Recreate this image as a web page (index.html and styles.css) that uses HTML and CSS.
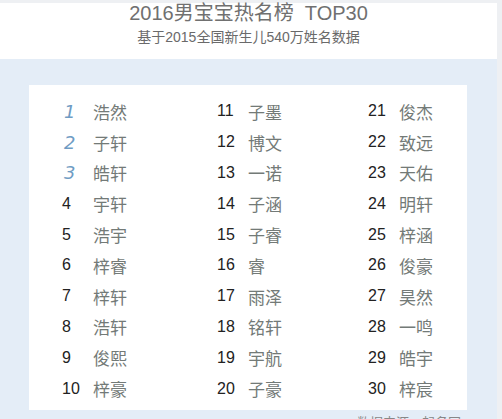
FILE: index.html
```html
<!DOCTYPE html>
<html lang="zh-CN">
<head>
  <meta charset="UTF-8" />
  <meta name="viewport" content="width=device-width, initial-scale=1.0" />
  <title>2016男宝宝热名榜 TOP30</title>
  <link rel="stylesheet" href="styles.css">
</head>
<body>
  <div class="page">
    <div class="head">
      <h1 class="title">2016男宝宝热名榜&nbsp; TOP30</h1>
      <p class="sub">基于2015全国新生儿540万姓名数据</p>
    </div>

    <div class="main">
      <div class="card">
        <div class="col">
          <div class="row"><span class="num top">1</span><span class="name">浩然</span></div>
          <div class="row"><span class="num top">2</span><span class="name">子轩</span></div>
          <div class="row"><span class="num top">3</span><span class="name">皓轩</span></div>
          <div class="row"><span class="num">4</span><span class="name">宇轩</span></div>
          <div class="row"><span class="num">5</span><span class="name">浩宇</span></div>
          <div class="row"><span class="num">6</span><span class="name">梓睿</span></div>
          <div class="row"><span class="num">7</span><span class="name">梓轩</span></div>
          <div class="row"><span class="num">8</span><span class="name">浩轩</span></div>
          <div class="row"><span class="num">9</span><span class="name">俊熙</span></div>
          <div class="row"><span class="num">10</span><span class="name">梓豪</span></div>
        </div>
        <div class="col">
          <div class="row"><span class="num">11</span><span class="name">子墨</span></div>
          <div class="row"><span class="num">12</span><span class="name">博文</span></div>
          <div class="row"><span class="num">13</span><span class="name">一诺</span></div>
          <div class="row"><span class="num">14</span><span class="name">子涵</span></div>
          <div class="row"><span class="num">15</span><span class="name">子睿</span></div>
          <div class="row"><span class="num">16</span><span class="name">睿</span></div>
          <div class="row"><span class="num">17</span><span class="name">雨泽</span></div>
          <div class="row"><span class="num">18</span><span class="name">铭轩</span></div>
          <div class="row"><span class="num">19</span><span class="name">宇航</span></div>
          <div class="row"><span class="num">20</span><span class="name">子豪</span></div>
        </div>
        <div class="col">
          <div class="row"><span class="num">21</span><span class="name">俊杰</span></div>
          <div class="row"><span class="num">22</span><span class="name">致远</span></div>
          <div class="row"><span class="num">23</span><span class="name">天佑</span></div>
          <div class="row"><span class="num">24</span><span class="name">明轩</span></div>
          <div class="row"><span class="num">25</span><span class="name">梓涵</span></div>
          <div class="row"><span class="num">26</span><span class="name">俊豪</span></div>
          <div class="row"><span class="num">27</span><span class="name">昊然</span></div>
          <div class="row"><span class="num">28</span><span class="name">一鸣</span></div>
          <div class="row"><span class="num">29</span><span class="name">皓宇</span></div>
          <div class="row"><span class="num">30</span><span class="name">梓宸</span></div>
        </div>
      </div>
      <p class="source">数据来源：起名网</p>
    </div>
  </div>
</body>
</html>
```

FILE: styles.css
```css
* {
  box-sizing: border-box;
}
body {
  margin: 0;
  font-family: "Liberation Sans", "Noto Sans CJK SC", sans-serif;
  background: #eef0f3;
  overflow: hidden;
}

.page {
  width: 502px;
  height: 419px;
  padding-top: 3px;
  padding-right: 5px;
  overflow: hidden;
}

.head {
  background: #fff;
  height: 56px;
  text-align: center;
  color: #6a6a6a;
}
.title {
  margin: 0;
  font-size: 20px;
  font-weight: normal;
  line-height: 20px;
  color: #707070;
}
.sub {
  margin: 4px 0 0;
  font-size: 14px;
  line-height: 20px;
}

.main {
  background: #e4edf7;
  height: 360px;
  padding: 26px 30px 0 29px;
}

.card {
  background: #fff;
  width: 438px;
  height: 325px;
  padding: 11px 0 0 33px;
  display: grid;
  grid-template-columns: 155px 151px 1fr;
}

.row {
  display: flex;
  align-items: center;
  height: 30.8px;
}
.num {
  width: 31px;
  font-size: 16px;
  color: #222;
}
.num.top {
  font-family: "DejaVu Sans", sans-serif;
  font-style: italic;
  font-size: 18px;
  color: #6f9cc4;
  padding-left: 2px;
}
.name {
  font-size: 17px;
  color: #737a77;
}

.source {
  margin: 2px 0 0;
  text-align: right;
  padding-right: 6px;
  font-size: 13px;
  color: #888;
}
```
